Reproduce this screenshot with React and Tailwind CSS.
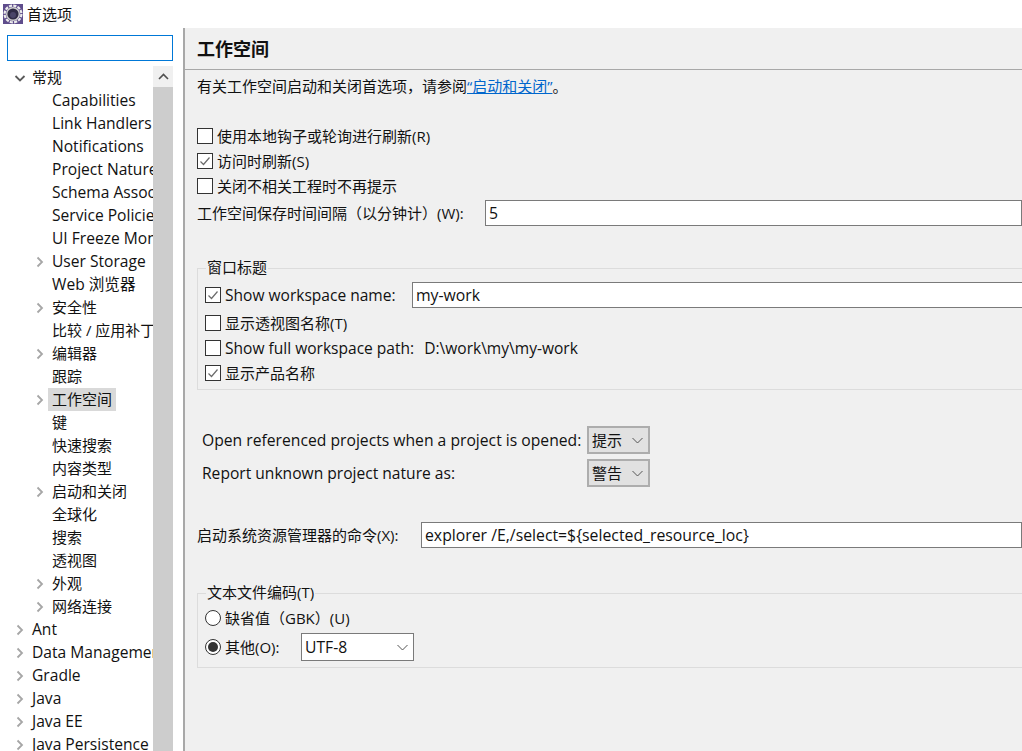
import React from 'react';

const font = { fontFamily: '"Open Sans", "Noto Sans CJK SC", sans-serif' };

const treeItems = [
  { label: '常规', depth: 0, arrow: 'open' },
  { label: 'Capabilities', depth: 1, latin: true },
  { label: 'Link Handlers', depth: 1, latin: true },
  { label: 'Notifications', depth: 1, latin: true },
  { label: 'Project Natures', depth: 1, latin: true },
  { label: 'Schema Associations', depth: 1, latin: true },
  { label: 'Service Policies', depth: 1, latin: true },
  { label: 'UI Freeze Monitoring', depth: 1, latin: true },
  { label: 'User Storage', depth: 1, arrow: 'closed', latin: true },
  { label: 'Web 浏览器', depth: 1, latin: true },
  { label: '安全性', depth: 1, arrow: 'closed' },
  { label: '比较 / 应用补丁', depth: 1 },
  { label: '编辑器', depth: 1, arrow: 'closed' },
  { label: '跟踪', depth: 1 },
  { label: '工作空间', depth: 1, arrow: 'closed', selected: true },
  { label: '键', depth: 1 },
  { label: '快速搜索', depth: 1 },
  { label: '内容类型', depth: 1 },
  { label: '启动和关闭', depth: 1, arrow: 'closed' },
  { label: '全球化', depth: 1 },
  { label: '搜索', depth: 1 },
  { label: '透视图', depth: 1 },
  { label: '外观', depth: 1, arrow: 'closed' },
  { label: '网络连接', depth: 1, arrow: 'closed' },
  { label: 'Ant', depth: 0, arrow: 'closed', latin: true },
  { label: 'Data Management', depth: 0, arrow: 'closed', latin: true },
  { label: 'Gradle', depth: 0, arrow: 'closed', latin: true },
  { label: 'Java', depth: 0, arrow: 'closed', latin: true },
  { label: 'Java EE', depth: 0, arrow: 'closed', latin: true },
  { label: 'Java Persistence', depth: 0, arrow: 'closed', latin: true },
];

function GearIcon() {
  return (
    <svg width="20" height="20" viewBox="0 0 20 20" className="shrink-0">
      <rect width="20" height="20" fill="#5f4d8c" />
      <circle cx="10" cy="10" r="8.4" fill="none" stroke="#ececec" strokeWidth="2.2" strokeDasharray="3.2 1.2" />
      <circle cx="10" cy="10" r="7" fill="#cfcfcf" />
      <circle cx="10" cy="10" r="5.6" fill="#2f2b45" />
      <circle cx="10" cy="11" r="3" fill="#4a4568" />
    </svg>
  );
}

function TreeArrow({ type }) {
  if (type === 'open') {
    return (
      <svg width="12" height="12" viewBox="0 0 12 12">
        <path d="M1.5 4 L6 8.5 L10.5 4" fill="none" stroke="#5a5a5a" strokeWidth="1.8" />
      </svg>
    );
  }
  return (
    <svg width="12" height="12" viewBox="0 0 12 12">
      <path d="M3.5 1.5 L8 6 L3.5 10.5" fill="none" stroke="#a6a6a6" strokeWidth="1.8" />
    </svg>
  );
}

function TreeRow({ item }) {
  return (
    <div className={`flex h-[23px] items-center ${item.depth === 0 ? 'pl-[14px]' : 'pl-[34px]'}`}>
      <div className="flex w-[14px] shrink-0 justify-start">
        {item.arrow && <TreeArrow type={item.arrow} />}
      </div>
      <span
        className={`whitespace-nowrap px-[4px] leading-[23px] ${item.latin ? 'text-[15.6px]' : ''} ${item.selected ? 'bg-[#d9d9d9]' : ''}`}
      >
        {item.label}
      </span>
    </div>
  );
}

function Checkbox({ checked }) {
  return (
    <div className="flex h-[16px] w-[16px] shrink-0 items-center justify-center border border-[#333] bg-white">
      {checked && (
        <svg width="12" height="12" viewBox="0 0 12 12">
          <path d="M1.5 6.5 L4.5 9.5 L10.5 2.5" fill="none" stroke="#6b6b6b" strokeWidth="1.2" />
        </svg>
      )}
    </div>
  );
}

function Radio({ checked }) {
  return (
    <div className="flex h-[16px] w-[16px] shrink-0 items-center justify-center rounded-full border border-[#333] bg-white">
      {checked && <div className="h-[10px] w-[10px] rounded-full bg-[#333]" />}
    </div>
  );
}

function CheckRow({ checked, children }) {
  return (
    <div className="flex h-[25px] items-center gap-[4px]">
      <Checkbox checked={checked} />
      <span className="whitespace-nowrap">{children}</span>
    </div>
  );
}

function TextBox({ value }) {
  return (
    <div className="flex h-[26px] min-w-0 flex-1 items-center whitespace-nowrap border border-[#7a7a7a] bg-white px-[3px] text-[15.8px]">
      {value}
    </div>
  );
}

function Chevron() {
  return (
    <svg width="11" height="7" viewBox="0 0 11 7">
      <path d="M0.5 1 L5.5 6 L10.5 1" fill="none" stroke="#555" strokeWidth="1" />
    </svg>
  );
}

function Combo({ value, className = '' }) {
  return (
    <div className={`flex h-[28px] items-center justify-between pl-[3px] pr-[5px] ${className}`}>
      <span>{value}</span>
      <Chevron />
    </div>
  );
}

function Group({ title, className = '', children }) {
  return (
    <div className={`relative -mr-[4px] border border-[#dcdcdc] ${className}`}>
      <span className="absolute -top-[12px] left-[8px] bg-[#f0f0f0] px-[1px] leading-[20px]">{title}</span>
      {children}
    </div>
  );
}

export default function App() {
  return (
    <div
      className="flex h-[751px] w-[1022px] flex-col overflow-hidden bg-white text-[15px] leading-[20px] text-[#111]"
      style={font}
    >
      <div className="flex h-[28px] shrink-0 items-center gap-[4px] pl-[3px]">
        <GearIcon />
        <span>首选项</span>
      </div>

      <div className="flex min-h-0 flex-1">
        {/* 左侧树 */}
        <div className="flex w-[183px] shrink-0 flex-col overflow-hidden pt-[7px]">
          <div className="ml-[7px] h-[26px] w-[166px] shrink-0 border-[1.5px] border-[#0078d7] bg-white" />
          <div className="mt-[5px] flex min-h-0 w-[173px] flex-1">
            <div className="min-w-0 flex-1 overflow-hidden">
              {treeItems.map((item) => (
                <TreeRow key={item.label} item={item} />
              ))}
            </div>
            <div className="flex w-[20px] shrink-0 flex-col bg-[#f0f0f0]">
              <div className="flex h-[21px] items-center justify-center">
                <svg width="11" height="7" viewBox="0 0 11 7">
                  <path d="M1 6 L5.5 1.5 L10 6" fill="none" stroke="#505050" strokeWidth="1.6" />
                </svg>
              </div>
              <div className="flex-1 bg-[#cdcdcd]" />
            </div>
          </div>
        </div>

        {/* 右侧面板 */}
        <div className="flex min-w-0 flex-1 flex-col border-l-2 border-[#a8a8a8] bg-[#f0f0f0]">
          <div className="flex h-[42px] shrink-0 items-center border-b border-[#a8a8a8] pl-[12px] text-[18px] font-bold">
            工作空间
          </div>

          <div className="flex flex-col pl-[12px]">
            <div className="mt-[6px] h-[20px] whitespace-nowrap">
              有关工作空间启动和关闭首选项，请参阅
              <span className="text-[#0066cc] underline">“启动和关闭”</span>。
            </div>

            <div className="mt-[27px]">
              <CheckRow>使用本地钩子或轮询进行刷新(R)</CheckRow>
              <CheckRow checked>访问时刷新(S)</CheckRow>
              <CheckRow>关闭不相关工程时不再提示</CheckRow>
            </div>

            <div className="mt-[2px] flex items-center">
              <span className="w-[288px] shrink-0 whitespace-nowrap">工作空间保存时间间隔（以分钟计）(W):</span>
              <TextBox value="5" />
            </div>

            <Group title="窗口标题" className="mt-[42px] h-[122px] pl-[7px] pt-[13px]">
              <div className="flex items-center gap-[4px]">
                <Checkbox checked />
                <span className="w-[183px] shrink-0 whitespace-nowrap text-[15.55px]">Show workspace name:</span>
                <TextBox value="my-work" />
              </div>
              <div className="mt-[2px]">
                <CheckRow>显示透视图名称(T)</CheckRow>
                <CheckRow>
                  <span className="text-[15.55px]">
                    Show full workspace path:<span className="ml-[10px]">D:\work\my\my-work</span>
                  </span>
                </CheckRow>
                <CheckRow checked>显示产品名称</CheckRow>
              </div>
            </Group>

            <div className="mt-[36px] flex flex-col gap-[5px] pl-[5px]">
              <div className="flex items-center">
                <span className="w-[385px] shrink-0 whitespace-nowrap text-[15.7px]">Open referenced projects when a project is opened:</span>
                <Combo value="提示" className="w-[63px] border-2 border-[#adadad] bg-[#e1e1e1]" />
              </div>
              <div className="flex items-center">
                <span className="w-[385px] shrink-0 whitespace-nowrap text-[15.6px]">Report unknown project nature as:</span>
                <Combo value="警告" className="w-[63px] border-2 border-[#adadad] bg-[#e1e1e1]" />
              </div>
            </div>

            <div className="mt-[35px] flex items-center">
              <span className="w-[224px] shrink-0 whitespace-nowrap">启动系统资源管理器的命令(X):</span>
              <TextBox value="explorer /E,/select=${selected_resource_loc}" />
            </div>

            <Group title="文本文件编码(T)" className="mt-[45px] h-[75px] pl-[7px] pt-[13px]">
              <div className="flex h-[21px] items-center gap-[4px]">
                <Radio />
                <span className="whitespace-nowrap">缺省值（GBK）(U)</span>
              </div>
              <div className="mt-[5px] flex items-center gap-[4px]">
                <Radio checked />
                <span className="w-[72px] shrink-0 whitespace-nowrap">其他(O):</span>
                <Combo value="UTF-8" className="w-[113px] border border-[#7a7a7a] bg-white text-[15.7px]" />
              </div>
            </Group>
          </div>
        </div>
      </div>
    </div>
  );
}
